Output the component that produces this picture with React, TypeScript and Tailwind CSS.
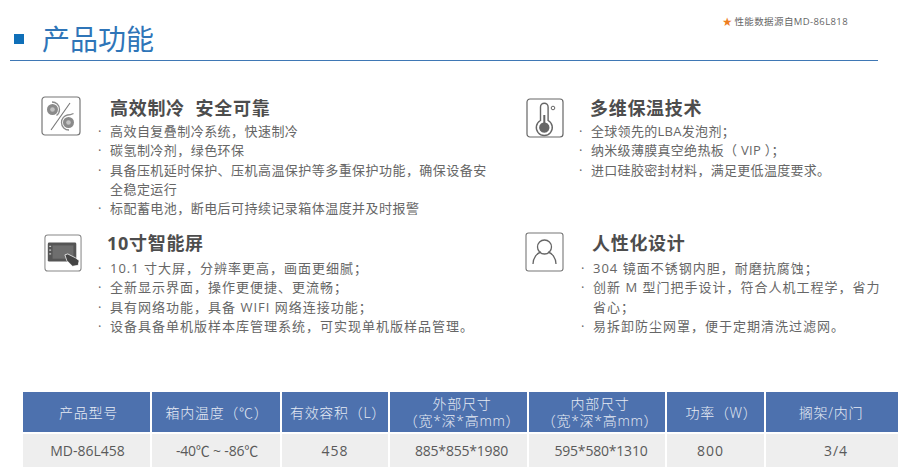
const font = "font-['Open_Sans','Noto_Sans_CJK_SC',sans-serif]";

function RefrigIcon() {
  return (
    <svg viewBox="0 0 40 40" className="h-10 w-10" fill="none">
      <rect x="1" y="1" width="38" height="38" rx="3" stroke="#777" strokeWidth="1.2" />
      <path d="M29 7 L10 34" stroke="#777" strokeWidth="1.1" />
      <circle cx="11.500" cy="13.500" r="5.500" fill="#8a8a8a" />
      <circle cx="11.500" cy="13.500" r="2.300" fill="#c2c2c2" />
      <path d="M11 6c4 0 7.500 3 7.500 7.500 0 2.500-1 4.500-3 6" stroke="#8a8a8a" strokeWidth="1.300" />
      <circle cx="27.500" cy="26.500" r="5.500" fill="#8a8a8a" />
      <circle cx="27.500" cy="26.500" r="2.300" fill="#c2c2c2" />
      <path d="M28 34c-4 0-7.500-3-7.500-7.500 0-4 3-7 6-7.500 2 0 4-.5 6-1.500" stroke="#8a8a8a" strokeWidth="1.300" />
    </svg>
  );
}

function ThermoIcon() {
  return (
    <svg viewBox="0 0 38 40" className="h-10 w-[38px]" fill="none">
      <rect x="1" y="1" width="36" height="38" rx="3" stroke="#666" strokeWidth="1.2" />
      <path d="M14.500 9a3.800 3.800 0 0 1 7.600 0v13.500a8 8 0 1 1-7.600 0z" stroke="#666" strokeWidth="1.400" />
      <path d="M17.300 17h2v7.500a5.200 5.200 0 1 1-2 0z" fill="#666" />
      <circle cx="27" cy="10" r="1.800" stroke="#666" strokeWidth="1" />
    </svg>
  );
}

function ScreenIcon() {
  return (
    <svg viewBox="0 0 40 40" className="h-[38px] w-[38px]" fill="none">
      <rect x="1" y="1" width="38" height="38" rx="3" stroke="#888" strokeWidth="1.100" />
      <rect x="4" y="9" width="30" height="20" rx="1.500" fill="#555" />
      <rect x="9" y="12" width="22" height="14" fill="#6e6e6e" />
      <path d="M5.500 13h2M5.500 17h2M5.500 21h2" stroke="#ccc" strokeWidth="1.300" />
      <path d="M22 22l3-1 8 4 4 3-1 5-6 1-6-6z" fill="#444" stroke="#fff" strokeWidth=".8" />
    </svg>
  );
}

function PersonIcon() {
  return (
    <svg viewBox="0 0 39 40" className="h-10 w-[39px]" fill="none">
      <rect x="1" y="1" width="37" height="38" rx="2.500" stroke="#777" strokeWidth="1.100" />
      <circle cx="19.500" cy="15" r="7" stroke="#666" strokeWidth="1.300" />
      <path d="M8 32c0-6 4-11 8-12M31 32c0-6-4-11-8-12" stroke="#666" strokeWidth="1.300" />
    </svg>
  );
}

const blocks = [
  {
    icon: <RefrigIcon />,
    title: "高效制冷  安全可靠",
    iconBox: "w-[57px] pt-0",
    titleBox: "ml-[12px]",
    body: "w-[392px]",
    row: "h-[135px]",
    list: "mt-[2px] tracking-[0.450px]",
    items: [
      "高效自复叠制冷系统，快速制冷",
      "碳氢制冷剂，绿色环保",
      "具备压机延时保护、压机高温保护等多重保护功能，确保设备安全稳定运行",
      "标配蓄电池，断电后可持续记录箱体温度并及时报警",
    ],
  },
  {
    icon: <ThermoIcon />,
    title: "多维保温技术",
    iconBox: "w-[53px] pt-[2px]",
    titleBox: "ml-[11px]",
    body: "w-[308px]",
    row: "h-[135px]",
    list: "mt-[2px] tracking-[0.300px]",
    items: ["全球领先的LBA发泡剂；", "纳米级薄膜真空绝热板（ VIP ）；", "进口硅胶密封材料，满足更低温度要求。"],
  },
  {
    icon: <ScreenIcon />,
    title: "10寸智能屏",
    iconBox: "w-[54px] pt-[3px]",
    titleBox: "ml-[9px]",
    body: "w-[392px]",
    row: "h-[134px] pl-[3px]",
    list: "mt-[4px] tracking-[1px]",
    items: [
      "10.1 寸大屏，分辨率更高，画面更细腻；",
      "全新显示界面，操作更便捷、更流畅；",
      "具有网络功能，具备 WIFI 网络连接功能；",
      "设备具备单机版样本库管理系统，可实现单机版样品管理。",
    ],
  },
  {
    icon: <PersonIcon />,
    title: "人性化设计",
    iconBox: "w-[56px] pt-[1px]",
    titleBox: "ml-[11px]",
    body: "w-[308px]",
    row: "h-[134px] -ml-[1px]",
    list: "mt-[4px] tracking-[1px]",
    items: [
      "304 镜面不锈钢内胆，耐磨抗腐蚀；",
      "创新 M 型门把手设计，符合人机工程学，省力省心；",
      "易拆卸防尘网罩，便于定期清洗过滤网。",
    ],
  },
];

const columns = [
  { head: ["产品型号"], value: "MD-86L458", w: "w-[129px]", tr: "pl-[2px]", hp: "pl-[4px]" },
  { head: ["箱内温度（℃）"], value: "-40℃ ~ -86℃", w: "w-[130px]", tr: "pl-[2px] tracking-[-0.200px]", hp: "pl-[2px]" },
  { head: ["有效容积（L）"], value: "458", w: "w-[108px]", tr: "tracking-[1px]", hp: "pl-[6px]" },
  { head: ["外部尺寸", "（宽*深*高mm）"], value: "885*855*1980", w: "w-[139px]", tr: "pl-[6px] tracking-[-0.200px]", hp: "pl-[7px]" },
  { head: ["内部尺寸", "（宽*深*高mm）"], value: "595*580*1310", w: "w-[138px]", tr: "pl-[8px] tracking-[-0.200px]", hp: "pl-[6px]" },
  { head: ["功率（W）"], value: "800", w: "w-[99px]", tr: "pr-[10px] tracking-[1px]", hp: "pl-[12px]" },
  { head: ["搁架/内门"], value: "3/4", w: "w-[132px]", tr: "pl-[8px] tracking-[1px]", hp: "pr-[2px]" },
];

function Block({ block }: { block: (typeof blocks)[number] }) {
  return (
    <div className={`flex items-start ${block.row}`}>
      <div className={`shrink-0 ${block.iconBox}`}>{block.icon}</div>
      <div className={block.body}>
        <h3 className={`h-[24px] whitespace-pre text-[18px] font-bold leading-[24px] tracking-[0.700px] text-[#4d4d4d] ${block.titleBox}`}>
          {block.title}
        </h3>
        <ul className={`text-[13px] leading-[19.300px] text-[#666666] ${block.list}`}>
          {block.items.map((item) => (
            <li key={item} className="flex">
              <span className="w-[12px] shrink-0">·</span>
              <span>{item}</span>
            </li>
          ))}
        </ul>
      </div>
    </div>
  );
}

export default function App() {
  return (
    <div className={`h-[475px] w-[924px] overflow-hidden bg-white ${font}`}>
      <header className="ml-[10px] h-[61px] w-[868px] border-b border-[#3f78b5] pt-[17px]">
        <div className="flex justify-end pr-[30px] text-[9.500px] leading-[10px] tracking-[0.400px] text-[#666]">
          <span className="mr-[2px] text-[#ee7d22]">★</span>性能数据源自MD-86L818
        </div>
        <div className="mt-[-6px] flex items-center">
          <span className="ml-[4px] h-[10px] w-[10px] bg-[#0f6fb8]" />
          <h1 className="ml-[18px] text-[28px] font-normal leading-[36px] text-[#2f75b8]">产品功能</h1>
        </div>
      </header>

      <section className="mt-[35px] grid w-[900px] grid-cols-[485px_370px] pl-[41px]">
        {blocks.map((block) => (
          <Block key={block.title} block={block} />
        ))}
      </section>

      <table className="ml-[23px] mt-[27px] w-[875px] table-fixed border-separate border-spacing-0 text-center text-[14px]">
        <thead>
          <tr>
            {columns.map((col, i) => (
              <th
                key={col.value}
                className={`${col.w} ${col.hp} h-[42px] border-b-2 border-white bg-[#4d71ae] text-[14px] font-light leading-[17px] tracking-[0.700px] text-[#e6ebf4] ${i < 6 ? "border-r-2" : ""}`}
              >
                {col.head.map((line) => (
                  <div key={line}>{line}</div>
                ))}
              </th>
            ))}
          </tr>
        </thead>
        <tbody>
          <tr>
            {columns.map((col, i) => (
              <td
                key={col.value}
                className={`h-[33px] border-white bg-[#eeeeee] leading-[33px] text-[#5a5a5a] ${col.tr} ${i < 6 ? "border-r-2" : ""}`}
              >
                {col.value}
              </td>
            ))}
          </tr>
        </tbody>
      </table>
    </div>
  );
}
